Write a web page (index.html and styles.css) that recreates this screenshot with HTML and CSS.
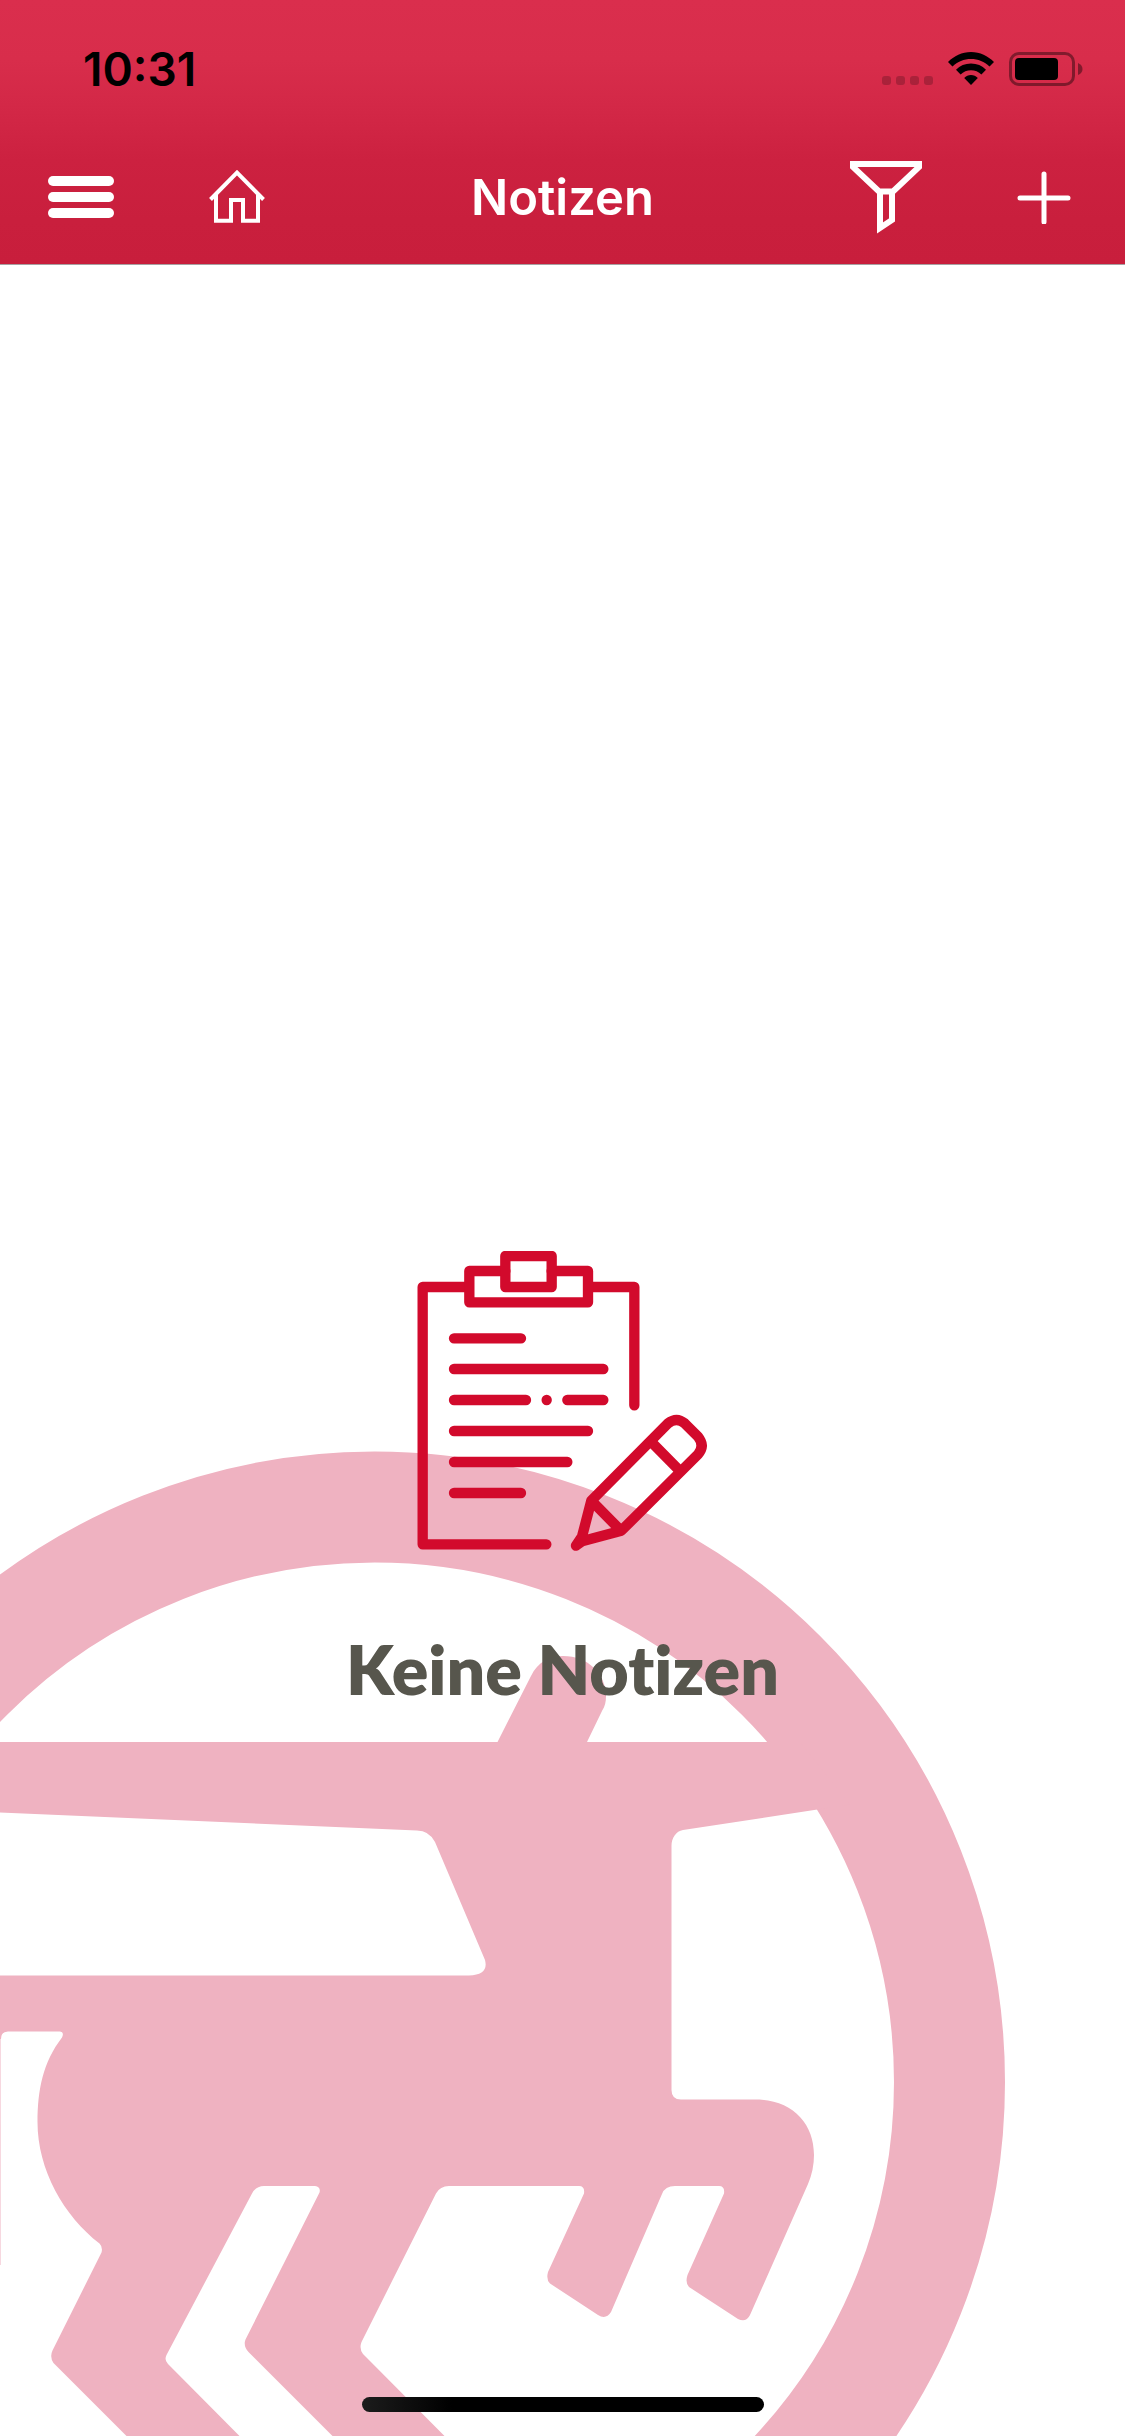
FILE: index.html
```html
<!DOCTYPE html>
<html lang="de">
<head>
<meta charset="utf-8">
<meta name="viewport" content="width=device-width, initial-scale=1">
<title>Notizen</title>
<link rel="stylesheet" href="styles.css">
</head>
<body>
<div class="app">
  <header class="header">
    <div class="status">
      <time class="clock">10:31</time>
      <div class="indicators">
        <svg class="signal" width="51" height="34" viewBox="882 52 51 34" aria-hidden="true">
          <rect x="882" y="76" width="9" height="9" rx="3"/>
          <rect x="896" y="76" width="9" height="9" rx="3"/>
          <rect x="910" y="76" width="9" height="9" rx="3"/>
          <rect x="924" y="76" width="9" height="9" rx="3"/>
        </svg>
        <svg width="46" height="34" viewBox="948 52 46 34" aria-hidden="true">
          <path d="M971 52c9 0 17 4 23 10l-4.500 4.500c-5-5-11.500-7.500-18.500-7.500s-13.500 2.500-18.500 7.500L948 62c6-6 14-10 23-10z"/>
          <path d="M971 63.500c6 0 11 2.200 15 6.300l-4.600 4.800c-2.800-2.800-6.500-4.300-10.400-4.300s-7.600 1.500-10.400 4.300l-4.600-4.800c4-4.100 9-6.300 15-6.300z"/>
          <path d="M971 75c2.600 0 5 1.100 6.800 3L971 85l-6.800-7c1.800-1.900 4.200-3 6.800-3z"/>
        </svg>
        <svg width="74" height="34" viewBox="1009 52 74 34" aria-hidden="true">
          <rect class="battery-shell" x="1010.500" y="53.500" width="63" height="31" rx="8.500"/>
          <rect x="1015" y="58" width="43" height="22" rx="4"/>
          <path class="battery-nub" d="M1078 63q4.500 2 4.500 6t-4.500 6z"/>
        </svg>
      </div>
    </div>
    <nav class="bar">
      <div class="group">
        <button class="icon-button" type="button" aria-label="Menü">
          <svg width="66" height="44" viewBox="0 0 66 44">
            <rect width="66" height="10" y="1" rx="5"/>
            <rect width="66" height="10" y="17" rx="5"/>
            <rect width="66" height="10" y="33" rx="5"/>
          </svg>
        </button>
        <button class="icon-button" type="button" aria-label="Startseite">
          <svg class="line" width="56" height="56" viewBox="209 168 56 56">
            <path d="M210.500 198.500L237 171.500L263.500 198.500"/>
            <path d="M216 194V219.800H231V199H243V219.800H258V194"/>
          </svg>
        </button>
      </div>
      <h1 class="title">Notizen</h1>
      <div class="group group-end">
        <button class="icon-button" type="button" aria-label="Filter">
          <svg class="line filter" width="72" height="74" viewBox="850 160 72 74">
            <path d="M853 164H919V167L893 191.500H879L853 167Z"/>
            <path d="M880 191.500V228L892 220V191.500"/>
          </svg>
        </button>
        <button class="icon-button" type="button" aria-label="Neue Notiz">
          <svg class="line plus" width="54" height="54" viewBox="0 0 54 54">
            <path d="M3 28H51M27 4V52"/>
          </svg>
        </button>
      </div>
    </nav>
  </header>

  <main class="content">
    <svg class="emblem" viewBox="0 1440 1125 996" aria-hidden="true">
      <circle class="ring" cx="374.500" cy="2082" r="575"/>
      <path d="M0 1742H497.500L531 1676C538 1662 549 1656 563 1656C588 1656 606 1674 606 1696C606 1702 605 1706 602 1711L587 1742H800L850 1804.500L683 1830C676 1831 671.500 1838 671.500 1846V2090Q671.500 2099.500 681 2099.500H755C792 2099.500 814 2123 814 2155Q814 2170 808 2184L750 2315Q746 2323 738 2319L689 2287Q685 2283 687.500 2275L724 2193.500Q725 2186 719 2186H675Q665 2186 662 2194L611 2312Q606 2320 598 2315L550 2283.500Q546 2280 548 2272L584 2193.500Q585 2186 579 2186H449Q440 2186 436 2193.500L361.500 2342Q359 2349 363 2354L444.500 2436H332.500L248.500 2352Q243 2346 245.500 2339.500L319.500 2192.500Q321 2187 315 2186H264Q256 2186 252 2193.500L166.500 2355Q164 2360 168 2364L239.500 2436H126.500L53.500 2363Q49.500 2357 52.500 2350.500L101.500 2252.500Q103 2247 99.500 2243.500C64 2216 37.500 2170 37.500 2122C37.500 2090 43 2062 62 2037.500Q64.500 2032 60 2031.500H8Q1 2031.500 1 2039H0V1975.500H469Q489 1975 485 1960L435 1842Q429 1830.500 417 1830.500L0 1812.500Z"/>
      <rect class="hairline" x="0" y="2038" width="1" height="227"/>
    </svg>
    <section class="empty">
      <svg class="empty-icon" viewBox="54 63 870 900" aria-hidden="true">
        <path d="M442 943H71V171H205M575 171H706V526"/>
        <path d="M319 123H211V217H567V123H458"/>
        <path d="M319 78H458V171H319Z"/>
        <path d="M165 325H366M165 417H613M165 510H381M443 510H443.100M505 510H613M165 603H567M165 696H505M165 789H366"/>
        <path d="M531 947L549 920L577 812L807 580Q833 560 857 580L897 620Q919 648 897 673L667 902L549 934L531 947"/>
        <path d="M580 815L662 898M764 643L838 718"/>
      </svg>
      <p class="empty-text">Keine Notizen</p>
    </section>
  </main>
  <div class="home-indicator"></div>
</div>
</body>
</html>
```
FILE: styles.css
```css
* {
  box-sizing: border-box;
}

body {
  margin: 0;
  background: #fff;
  font-family: Inter, "Liberation Sans", sans-serif;
}

.app {
  position: relative;
  display: flex;
  flex-direction: column;
  min-height: 100vh;
}

.header {
  border-bottom: 1px solid #a8a0a2;
  background: linear-gradient(#da2e4d 0, #d82d4b 60px, #d32847 105px, #cc2140 160px, #c91f3d 220px, #c81e3c 264px);
}

.status {
  display: flex;
  align-items: center;
  justify-content: space-between;
  height: 132px;
  padding: 6px 42px 0 83px;
}

.clock {
  font-size: 46px;
  font-weight: 600;
  line-height: 56px;
}

.indicators {
  display: flex;
  gap: 15px;
}

.signal {
  opacity: 0.2;
}

.battery-shell {
  fill: none;
  stroke: #000;
  stroke-width: 3;
  opacity: 0.4;
}

.battery-nub {
  opacity: 0.4;
}

.bar {
  display: grid;
  grid-template-columns: 1fr auto 1fr;
  align-items: center;
  height: 132px;
  padding: 0 48px 2px;
}

.group {
  display: flex;
  align-items: center;
  gap: 95px;
}

.group-end {
  justify-content: flex-end;
  padding-right: 6px;
}

.icon-button {
  display: flex;
  padding: 0;
  border: 0;
  background: none;
  color: #fff;
  fill: currentColor;
}

.line {
  fill: none;
  stroke: currentColor;
  stroke-width: 4;
}

.filter {
  stroke-width: 6;
}

.plus {
  stroke-width: 5;
  stroke-linecap: round;
}

.title {
  margin: 0;
  padding-top: 2px;
  color: #fff;
  font-size: 49px;
  font-weight: 600;
  line-height: 60px;
}

.content {
  position: relative;
  display: flex;
  flex: 1;
  flex-direction: column;
  align-items: center;
  justify-content: center;
  padding-top: 259px;
}

.emblem {
  position: absolute;
  bottom: 0;
  left: 0;
  width: 100%;
  fill: #efb2c1;
}

.ring {
  fill: none;
  stroke: #efb2c1;
  stroke-width: 111;
}

.hairline {
  opacity: 0.5;
}

.empty {
  position: relative;
  display: flex;
  flex-direction: column;
  align-items: center;
  gap: 78px;
}

.empty-icon {
  width: 290px;
  height: 300px;
  fill: none;
  stroke: #d20a2c;
  stroke-width: 31;
  stroke-linecap: round;
  stroke-linejoin: round;
}

.empty-text {
  margin: 0;
  color: #57564d;
  font-family: Lato, "Open Sans", sans-serif;
  font-size: 68px;
  font-weight: 800;
  font-variant-ligatures: none;
  line-height: 80px;
}

.home-indicator {
  position: absolute;
  bottom: 24px;
  left: 50%;
  width: 402px;
  height: 15px;
  border-radius: 8px;
  background: linear-gradient(90deg, #1c1c1c, #000 90px);
  transform: translateX(-50%);
}
```
